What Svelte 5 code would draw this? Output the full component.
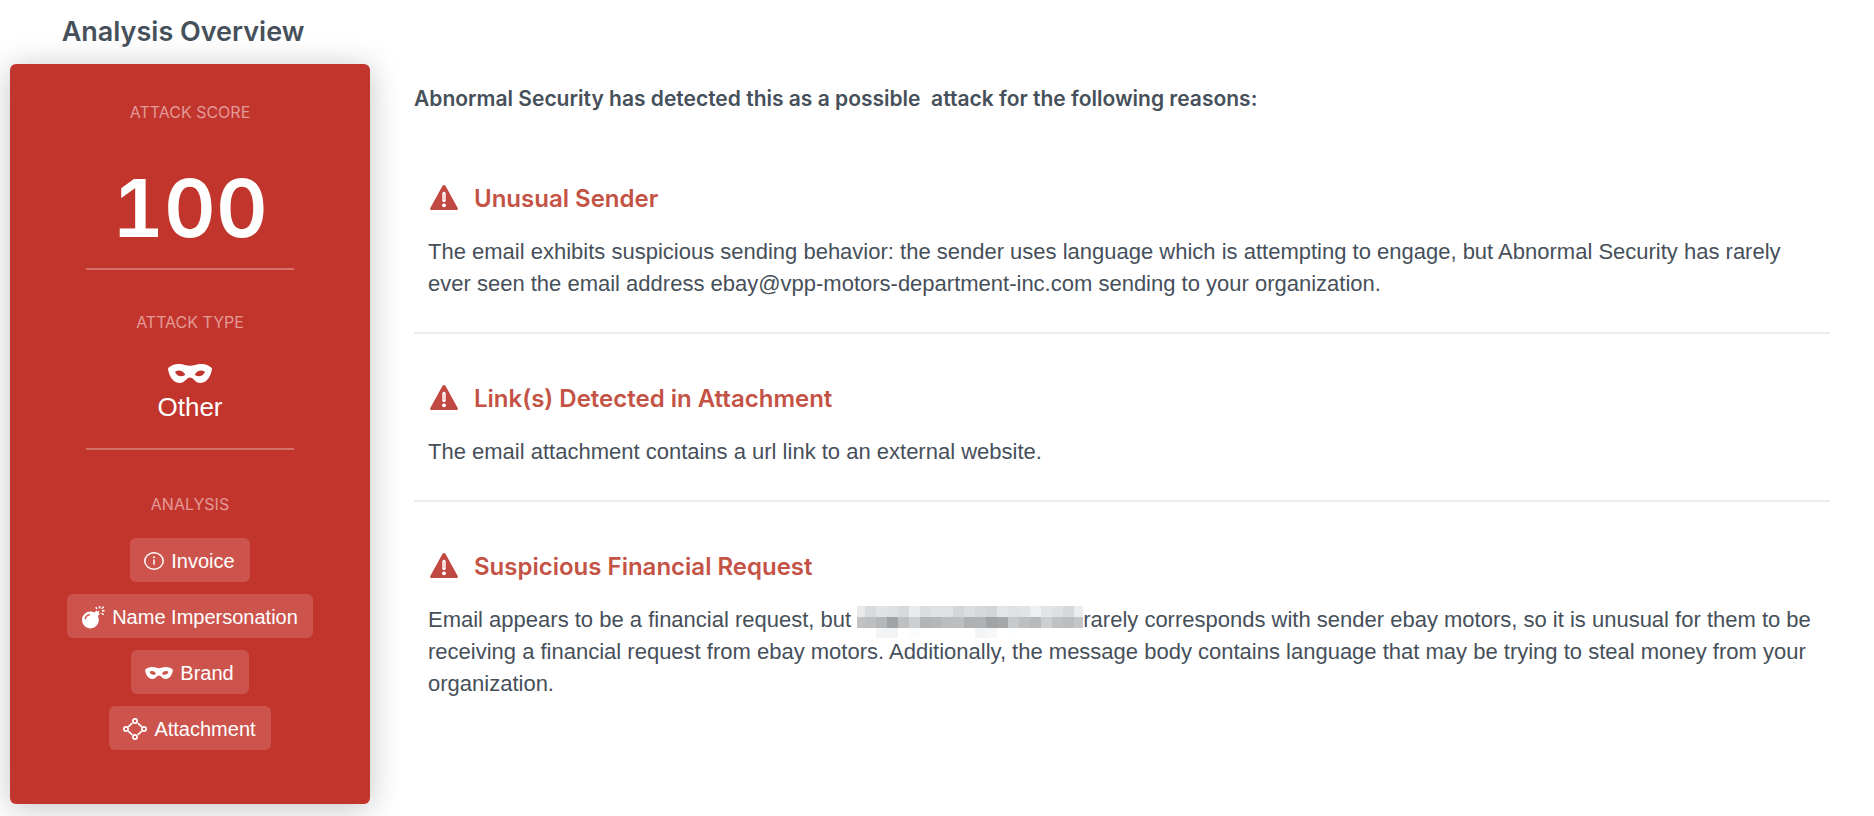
<script lang="ts">
	type IconName = 'info' | 'bomb' | 'mask' | 'nodes';

	type Tag = {
		label: string;
		icon: IconName;
	};

	type Reason = {
		title: string;
		before: string;
		/** Text that follows the redacted name, if there is one */
		after?: string;
	};

	const score = 100;

	const tags: Tag[] = [
		{ label: 'Invoice', icon: 'info' },
		{ label: 'Name Impersonation', icon: 'bomb' },
		{ label: 'Brand', icon: 'mask' },
		{ label: 'Attachment', icon: 'nodes' }
	];

	const reasons: Reason[] = [
		{
			title: 'Unusual Sender',
			before:
				'The email exhibits suspicious sending behavior: the sender uses language which is attempting to engage, but Abnormal Security has rarely ever seen the email address ebay@vpp-motors-department-inc.com sending to your organization.'
		},
		{
			title: 'Link(s) Detected in Attachment',
			before: 'The email attachment contains a url link to an external website.'
		},
		{
			title: 'Suspicious Financial Request',
			before: 'Email appears to be a financial request, but ',
			after:
				'rarely corresponds with sender ebay motors, so it is unusual for them to be receiving a financial request from ebay motors. Additionally, the message body contains language that may be trying to steal money from your organization.'
		}
	];

	// Grey levels of the redaction mosaic, one row per line of blocks
	const mosaic = [
		[232, 217, 226, 223, 216, 234, 220, 224, 224, 212, 220, 214, 211, 228, 224, 226, 238, 227, 223, 214, 235],
		[193, 190, 182, 162, 190, 205, 179, 182, 188, 189, 175, 177, 162, 166, 200, 190, 184, 205, 192, 188, 196, 218],
		[255, 255, 243, 243, 255, 251, 255, 255, 255, 255, 255, 243, 246, 255, 253, 255, 255, 255, 255, 255, 255]
	];

	function cellX(column: number) {
		return column === 0 ? 0 : column * 11 - 3;
	}
</script>

{#snippet icon(name: IconName)}
	{#if name === 'info'}
		<svg class="icon" width="20" height="18" viewBox="0 0 20 18" aria-hidden="true">
			<ellipse cx="10" cy="9" rx="9.2" ry="8.2" fill="none" stroke="currentColor" stroke-width="1.5" />
			<path d="M10 7.6v5.2" stroke="currentColor" stroke-width="1.5" />
			<circle cx="10" cy="5.2" r="1" fill="currentColor" />
		</svg>
	{:else if name === 'bomb'}
		<svg class="icon" width="24" height="24" viewBox="0 0 24 24" aria-hidden="true">
			<circle cx="9.4" cy="15" r="8.4" fill="currentColor" />
			<path d="M12.5 8.5l2.9-2.9 3.4 3.4-2.9 2.9z" fill="currentColor" />
			<path class="cut" d="M4.2 14.2q.7-4 4.7-4.7" />
			<path
				d="M18.6 1v2.6M14.8 2.2l1.2 1.8M22.8 1.8l-2.2 2M21 5.8h2.6M20.6 8l2 1.8M18.2 6.4l-1.6 1.4"
				fill="none"
				stroke="currentColor"
				stroke-width="1.5"
			/>
		</svg>
	{:else if name === 'mask'}
		<svg class="icon" width="28" height="12" viewBox="0 0 44 19" aria-hidden="true">
			{@render maskShape()}
		</svg>
	{:else}
		<svg class="icon" width="24" height="22" viewBox="0 0 24 22" aria-hidden="true">
			<g fill="none" stroke="currentColor" stroke-width="1.7">
				<circle cx="12" cy="3" r="2.1" />
				<circle cx="3" cy="11" r="2.1" />
				<circle cx="21" cy="11" r="2.1" />
				<circle cx="12" cy="19" r="2.1" />
				<path d="M9.3 5.2L5.2 8.8M14.7 5.2l4.1 3.6M5.2 13.2l4.1 3.6M18.8 13.2l-4.1 3.6" />
			</g>
		</svg>
	{/if}
{/snippet}

{#snippet maskShape()}
	<path
		fill="currentColor"
		fill-rule="evenodd"
		d="M0 4.500C2.500 1.200 7 0 11 0c4.500 0 7.500 1.800 11 1.800S28.500 0 33 0c4 0 8.500 1.200 11 4.500C43.500 10 40 19 32.500 19 27 19 25.500 13.500 22 13.500S17 19 11.500 19C4 19 .5 10 0 4.500zM7 8c1.200 2.900 4 4.400 6.500 4.200 1.500-.1 3-.8 3.700-1.700C15.500 7.500 13 6.300 10.500 6.500 9 6.600 7.800 7.200 7 8zM37 8c-1.200 2.900-4 4.400-6.500 4.200-1.500-.1-3-.8-3.700-1.700 1.700-3 4.200-4.200 6.700-4 1.500.1 2.700.7 3.500 1.500z"
	/>
{/snippet}

<main class="overview">
	<aside class="summary">
		<h1>Analysis Overview</h1>
		<div class="card">
			<section class="score">
				<h2>ATTACK SCORE</h2>
				<strong>{score}</strong>
			</section>
			<section class="type">
				<h2>ATTACK TYPE</h2>
				<svg width="44" height="19" viewBox="0 0 44 19" aria-hidden="true">
					{@render maskShape()}
				</svg>
				<span>Other</span>
			</section>
			<section class="analysis">
				<h2>ANALYSIS</h2>
				<ul>
					{#each tags as tag (tag.label)}
						<li>
							{@render icon(tag.icon)}
							{tag.label}
						</li>
					{/each}
				</ul>
			</section>
		</div>
	</aside>

	<div class="details">
		<p class="intro">Abnormal Security has detected this as a possible&nbsp; attack for the following reasons:</p>

		{#each reasons as reason (reason.title)}
			<section class="reason">
				<h3>
					<svg width="28" height="26" viewBox="0 0 28 26" aria-hidden="true">
						<path d="M12.400 1Q14-1 15.600 1L27.700 23Q28.400 25 26.500 25H1.500Q-.4 25 .3 23z" fill="#c24842" />
						<path d="M14 8.500v7" stroke="#fff" stroke-width="3.400" stroke-linecap="round" />
						<path d="M14 9v6" stroke="#d9837e" stroke-width=".6" />
						<circle cx="14" cy="20.300" r="1.900" fill="#fff" />
					</svg>
					{reason.title}
				</h3>
				<p>
					{reason.before}{#if reason.after}<svg class="redacted" width="226" height="32" viewBox="0 0 226 32" role="img" aria-label="Redacted">
						{#each mosaic as row, y}
							{#each row as level, x}
								<rect x={cellX(x)} y={y * 11} width="11" height="11" fill="rgb({level}, {level + 1}, {level + 3})" />
							{/each}
						{/each}
					</svg>{reason.after}{/if}
				</p>
			</section>
		{/each}
	</div>
</main>

<style>
	:global(body) {
		margin: 0;
		background: #fff;
	}

	.overview {
		display: flex;
		gap: 44px;
		padding: 10px 44px 12px 10px;
		font-family: 'Liberation Sans', Arial, sans-serif;
		color: #46505a;
	}

	h1,
	h2,
	h3,
	p,
	ul {
		margin: 0;
		padding: 0;
	}

	h1,
	h2,
	h3,
	.score strong,
	.intro {
		font-family: Inter, 'Liberation Sans', sans-serif;
		font-weight: 600;
	}

	.summary {
		flex: 0 0 360px;
	}

	h1 {
		padding: 2px 14px 0 0;
		margin-bottom: 12px;
		font-size: 27px;
		line-height: 40px;
		text-align: center;
	}

	.card {
		display: flex;
		flex-direction: column;
		align-items: center;
		padding: 36px 20px 54px;
		border-radius: 6px;
		background: #c2352d;
		box-shadow: 0 4px 32px rgba(0, 0, 0, 0.24);
		color: #fff;
	}

	.card section {
		display: flex;
		flex-direction: column;
		align-items: center;
	}

	h2 {
		font-size: 16px;
		font-weight: 400;
		line-height: 24px;
		color: #e39a96;
	}

	.score,
	.type {
		width: 208px;
		border-bottom: 2px solid #d4716b;
	}

	.score strong {
		padding: 34px 0 10px;
		font-size: 80px;
		font-variant-numeric: tabular-nums;
		line-height: 100px;
	}

	.type {
		padding: 40px 0 24px;
	}

	.type svg {
		margin: 30px 0 8px;
	}

	.type span {
		font-size: 26px;
		line-height: 33px;
	}

	.analysis {
		padding-top: 42px;
	}

	ul {
		display: flex;
		flex-direction: column;
		align-items: center;
		gap: 12px;
		margin-top: 22px;
		list-style: none;
	}

	li {
		display: flex;
		align-items: center;
		gap: 7px;
		padding: 3px 15px 0 14px;
		border-radius: 6px;
		background: #cc544d;
		font-size: 20px;
		line-height: 41px;
		white-space: nowrap;
	}

	.icon {
		flex: none;
		margin-bottom: 2px;
	}

	.cut {
		fill: none;
		stroke: #cc544d;
		stroke-width: 1.5px;
	}

	.details {
		flex: 1;
		min-width: 0;
		padding-top: 73px;
	}

	.intro {
		padding-bottom: 19px;
		font-size: 21px;
		line-height: 32px;
	}

	.reason {
		padding: 48px 14px 32px;
		border-bottom: 2px solid #e8edf1;
	}

	.reason:last-child {
		border-bottom: 0;
	}

	h3 {
		display: flex;
		align-items: center;
		gap: 16px;
		margin-bottom: 20px;
		padding-left: 2px;
		font-size: 24px;
		line-height: 34px;
		color: #c45345;
	}

	.reason h3 svg {
		flex: none;
		margin-bottom: 2px;
	}

	.reason p {
		font-size: 22px;
		line-height: 32px;
	}

	.redacted {
		margin: -7px 0 -9px;
		vertical-align: middle;
	}
</style>
